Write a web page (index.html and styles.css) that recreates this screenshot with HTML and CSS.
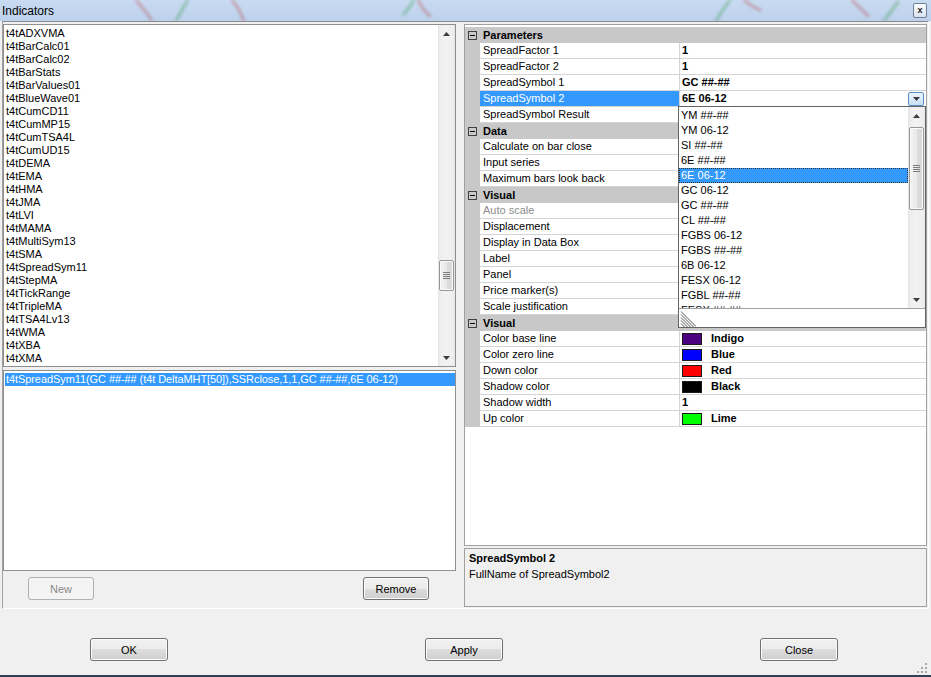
FILE: index.html
```html
<!DOCTYPE html>
<html lang="en">
<head>
<meta charset="utf-8">
<title>Indicators</title>
<link rel="stylesheet" href="styles.css">
</head>
<body>
<div class="window">
  <div class="titlebar">
    <svg class="title-chart" width="931" height="21" viewBox="0 0 931 21" aria-hidden="true">
      <g fill="none" stroke-width="3" stroke-linecap="round">
        <path class="tc-red" d="M136 0 L146 12 L152 21"/>
        <path class="tc-green" d="M176 21 L182 10 L188 0"/>
        <path class="tc-red" d="M232 0 L238 8 L244 21"/>
        <path class="tc-green" d="M404 14 L410 6 L414 0"/>
        <path class="tc-red" d="M418 0 L424 10 L430 16"/>
        <path class="tc-green" d="M716 21 L724 8 L730 0"/>
        <path class="tc-red" d="M744 0 L752 6 L760 10"/>
        <path class="tc-red" d="M852 0 L860 8 L868 16"/>
        <path class="tc-green" d="M884 21 L892 10 L898 2"/>
      </g>
    </svg>
    <span class="title-text">Indicators</span>
    <span class="title-close">x</span>
  </div>

  <div class="split">
    <div class="left-pane">
      <div class="listbox list-indicators">
        <ul class="list-items">
          <li>t4tADXVMA</li>
          <li>t4tBarCalc01</li>
          <li>t4tBarCalc02</li>
          <li>t4tBarStats</li>
          <li>t4tBarValues01</li>
          <li>t4tBlueWave01</li>
          <li>t4tCumCD11</li>
          <li>t4tCumMP15</li>
          <li>t4tCumTSA4L</li>
          <li>t4tCumUD15</li>
          <li>t4tDEMA</li>
          <li>t4tEMA</li>
          <li>t4tHMA</li>
          <li>t4tJMA</li>
          <li>t4tLVI</li>
          <li>t4tMAMA</li>
          <li>t4tMultiSym13</li>
          <li>t4tSMA</li>
          <li>t4tSpreadSym11</li>
          <li>t4tStepMA</li>
          <li>t4tTickRange</li>
          <li>t4tTripleMA</li>
          <li>t4tTSA4Lv13</li>
          <li>t4tWMA</li>
          <li>t4tXBA</li>
          <li>t4tXMA</li>
        </ul>
        <div class="vscroll">
          <div class="sb-arrow">
            <svg width="7" height="4" viewBox="0 0 7 4"><path d="M0 4 L3.5 0 L7 4 Z"/></svg>
          </div>
          <div class="sb-track">
            <div class="sb-thumb thumb-indicators"><span class="sb-grip"></span></div>
          </div>
          <div class="sb-arrow">
            <svg width="7" height="4" viewBox="0 0 7 4"><path d="M0 0 L7 0 L3.5 4 Z"/></svg>
          </div>
        </div>
      </div>

      <div class="listbox list-applied">
        <ul class="list-items">
          <li class="selected">t4tSpreadSym11(GC ##-## (t4t DeltaMHT[50]),SSRclose,1,1,GC ##-##,6E 06-12)</li>
        </ul>
      </div>

      <div class="pane-buttons">
        <button class="btn" disabled>New</button>
        <button class="btn">Remove</button>
      </div>
    </div>

    <div class="right-pane">
      <div class="propgrid">
        <div class="pg-cat"><span class="pg-toggle"></span>Parameters</div>
        <div class="pg-row"><span class="pg-gutter"></span><span class="pg-label">SpreadFactor 1</span><span class="pg-value bold">1</span></div>
        <div class="pg-row"><span class="pg-gutter"></span><span class="pg-label">SpreadFactor 2</span><span class="pg-value bold">1</span></div>
        <div class="pg-row"><span class="pg-gutter"></span><span class="pg-label">SpreadSymbol 1</span><span class="pg-value bold">GC ##-##</span></div>
        <div class="pg-row"><span class="pg-gutter"></span><span class="pg-label selected">SpreadSymbol 2</span><span class="pg-value bold">6E 06-12<span class="pg-dropbtn"><svg width="7" height="4" viewBox="0 0 7 4"><path d="M0 0 L7 0 L3.5 4 Z"/></svg></span></span></div>
        <div class="pg-row"><span class="pg-gutter"></span><span class="pg-label">SpreadSymbol Result</span><span class="pg-value"></span></div>

        <div class="pg-cat"><span class="pg-toggle"></span>Data</div>
        <div class="pg-row"><span class="pg-gutter"></span><span class="pg-label">Calculate on bar close</span><span class="pg-value"></span></div>
        <div class="pg-row"><span class="pg-gutter"></span><span class="pg-label">Input series</span><span class="pg-value"></span></div>
        <div class="pg-row"><span class="pg-gutter"></span><span class="pg-label">Maximum bars look back</span><span class="pg-value"></span></div>

        <div class="pg-cat"><span class="pg-toggle"></span>Visual</div>
        <div class="pg-row"><span class="pg-gutter"></span><span class="pg-label readonly">Auto scale</span><span class="pg-value"></span></div>
        <div class="pg-row"><span class="pg-gutter"></span><span class="pg-label">Displacement</span><span class="pg-value"></span></div>
        <div class="pg-row"><span class="pg-gutter"></span><span class="pg-label">Display in Data Box</span><span class="pg-value"></span></div>
        <div class="pg-row"><span class="pg-gutter"></span><span class="pg-label">Label</span><span class="pg-value"></span></div>
        <div class="pg-row"><span class="pg-gutter"></span><span class="pg-label">Panel</span><span class="pg-value"></span></div>
        <div class="pg-row"><span class="pg-gutter"></span><span class="pg-label">Price marker(s)</span><span class="pg-value"></span></div>
        <div class="pg-row"><span class="pg-gutter"></span><span class="pg-label">Scale justification</span><span class="pg-value"></span></div>

        <div class="pg-cat"><span class="pg-toggle"></span>Visual</div>
        <div class="pg-row"><span class="pg-gutter"></span><span class="pg-label">Color base line</span><span class="pg-value bold"><span class="swatch sw-indigo"></span>Indigo</span></div>
        <div class="pg-row"><span class="pg-gutter"></span><span class="pg-label">Color zero line</span><span class="pg-value bold"><span class="swatch sw-blue"></span>Blue</span></div>
        <div class="pg-row"><span class="pg-gutter"></span><span class="pg-label">Down color</span><span class="pg-value bold"><span class="swatch sw-red"></span>Red</span></div>
        <div class="pg-row"><span class="pg-gutter"></span><span class="pg-label">Shadow color</span><span class="pg-value bold"><span class="swatch sw-black"></span>Black</span></div>
        <div class="pg-row"><span class="pg-gutter"></span><span class="pg-label">Shadow width</span><span class="pg-value bold">1</span></div>
        <div class="pg-row"><span class="pg-gutter"></span><span class="pg-label">Up color</span><span class="pg-value bold"><span class="swatch sw-lime"></span>Lime</span></div>

        <div class="dropdown">
          <div class="dd-body">
            <ul class="dd-items">
              <li>YM ##-##</li>
              <li>YM 06-12</li>
              <li>SI ##-##</li>
              <li>6E ##-##</li>
              <li class="selected">6E 06-12</li>
              <li>GC 06-12</li>
              <li>GC ##-##</li>
              <li>CL ##-##</li>
              <li>FGBS 06-12</li>
              <li>FGBS ##-##</li>
              <li>6B 06-12</li>
              <li>FESX 06-12</li>
              <li>FGBL ##-##</li>
              <li class="partial">FESX ##-##</li>
            </ul>
            <div class="vscroll">
              <div class="sb-arrow">
                <svg width="7" height="4" viewBox="0 0 7 4"><path d="M0 4 L3.5 0 L7 4 Z"/></svg>
              </div>
              <div class="sb-track">
                <div class="sb-thumb thumb-dropdown"><span class="sb-grip"></span></div>
              </div>
              <div class="sb-arrow">
                <svg width="7" height="4" viewBox="0 0 7 4"><path d="M0 0 L7 0 L3.5 4 Z"/></svg>
              </div>
            </div>
          </div>
          <div class="dd-sizer">
            <svg width="16" height="16" viewBox="0 0 16 16" aria-hidden="true">
              <g stroke="#555" stroke-width="1">
                <path d="M1 3.5 L13.5 16"/>
                <path d="M1 6.5 L10.5 16"/>
                <path d="M1 9.5 L7.5 16"/>
                <path d="M1 12.5 L4.5 16"/>
                <path d="M1 0.5 L16 15.5"/>
              </g>
            </svg>
          </div>
        </div>
      </div>

      <div class="pg-help">
        <div class="help-title">SpreadSymbol 2</div>
        <div class="help-text">FullName of SpreadSymbol2</div>
      </div>
    </div>
  </div>

  <div class="footer">
    <button class="btn btn-wide">OK</button>
    <button class="btn btn-wide">Apply</button>
    <button class="btn btn-wide">Close</button>
    <svg class="size-grip" width="10" height="10" viewBox="0 0 10 10" aria-hidden="true">
      <g fill="#a8a8a8">
        <rect x="8" y="0" width="2" height="2"/>
        <rect x="4" y="4" width="2" height="2"/>
        <rect x="8" y="4" width="2" height="2"/>
        <rect x="0" y="8" width="2" height="2"/>
        <rect x="4" y="8" width="2" height="2"/>
        <rect x="8" y="8" width="2" height="2"/>
      </g>
    </svg>
  </div>
</div>
</body>
</html>
```

FILE: styles.css
```css
* {
  box-sizing: border-box;
}

html, body {
  margin: 0;
  padding: 0;
  background: #f0f0f0;
}

body {
  font-family: "Liberation Sans", Arial, sans-serif;
  font-size: 11px;
  color: #000;
}

ul {
  list-style: none;
  margin: 0;
  padding: 0;
}

.window {
  width: 931px;
  height: 677px;
  background: #f0f0f0;
  border-bottom: 2px solid #2f3e52;
  display: flex;
  flex-direction: column;
}

/* ---- caption bar ---- */
.titlebar {
  position: relative;
  height: 21px;
  flex: none;
  display: flex;
  align-items: center;
  background: linear-gradient(#c9dbf1, #bcd1ec);
  overflow: hidden;
}

.title-chart {
  position: absolute;
  left: 0;
  top: 0;
  filter: blur(1.4px);
}

.tc-red { stroke: rgba(190, 60, 60, 0.35); }
.tc-green { stroke: rgba(40, 150, 60, 0.35); }

.title-text {
  position: relative;
  font-size: 12px;
  padding-left: 2px;
  padding-top: 1px;
}

.title-close {
  position: relative;
  margin-left: auto;
  margin-right: 4px;
  width: 14px;
  height: 15px;
  border: 1px solid #6f7f94;
  border-radius: 2px;
  background: linear-gradient(#fbfcfe, #d9e3f0);
  font-size: 9px;
  font-weight: bold;
  line-height: 12px;
  text-align: center;
  color: #222;
}

/* ---- split panel ---- */
.split {
  flex: none;
  height: 588px;
  margin: 0 2px;
  border-top: 1px solid #8a8a8a;
  border-left: 1px solid #a0a0a0;
  border-right: 1px solid #fff;
  border-bottom: 1px solid #fff;
  display: flex;
}

.left-pane {
  width: 453px;
  padding-top: 2px;
  display: flex;
  flex-direction: column;
}

.right-pane {
  width: 463px;
  margin-left: 8px;
  padding-top: 2px;
  display: flex;
  flex-direction: column;
}

/* ---- list boxes ---- */
.listbox {
  background: #fff;
  border: 1px solid #8f8f8f;
  display: flex;
}

.list-indicators {
  height: 343px;
}

.list-applied {
  height: 201px;
  margin-top: 3px;
}

.list-items {
  flex: 1;
  padding: 2px 0 0 2px;
  line-height: 13px;
  white-space: nowrap;
  overflow: hidden;
}

.list-applied .list-items {
  padding: 2px 0 0 1px;
}

.list-items li.selected {
  background: #3399ff;
  color: #fff;
  padding-left: 1px;
  letter-spacing: -0.08px;
}

/* ---- scroll bars ---- */
.vscroll {
  width: 17px;
  flex: none;
  display: flex;
  flex-direction: column;
  background: linear-gradient(to right, #e2e2e2, #eeeeee 2px, #f2f2f2 50%, #eeeeee 15px, #e6e6e6);
}

.sb-arrow {
  height: 17px;
  flex: none;
  display: flex;
  align-items: center;
  justify-content: center;
}

.sb-arrow svg path,
.pg-dropbtn svg path {
  fill: #3c3c3c;
}

.sb-track {
  flex: 1;
  padding: 0 1px;
}

.sb-thumb {
  border: 1px solid #979797;
  border-radius: 2px;
  background: linear-gradient(to right, #f4f4f4, #e9e9e9 50%, #dcdcdc 51%, #d8d8d8);
  display: flex;
  align-items: center;
  justify-content: center;
  box-shadow: inset 0 0 0 1px #fbfbfb;
}

.thumb-indicators {
  margin-top: 218px;
  height: 31px;
}

.thumb-dropdown {
  margin-top: 3px;
  height: 83px;
}

.sb-grip {
  width: 7px;
  height: 7px;
  background: repeating-linear-gradient(#7d7d7d 0 1px, transparent 1px 2px);
}

/* ---- buttons ---- */
.btn {
  font-family: "Liberation Sans", Arial, sans-serif;
  font-size: 11px;
  color: #000;
  height: 23px;
  width: 66px;
  padding: 0;
  border: 1px solid #707070;
  border-radius: 3px;
  background: linear-gradient(#f2f2f2, #ebebeb 50%, #dddddd 50%, #cfcfcf);
  box-shadow: inset 0 0 0 1px #fcfcfc;
}

.btn:disabled {
  color: #8a8a8a;
  border-color: #adb2b5;
  background: #f4f4f4;
  box-shadow: none;
}

.pane-buttons {
  margin-top: 6px;
  padding-left: 25px;
  display: flex;
  gap: 269px;
}

/* ---- property grid ---- */
.propgrid {
  position: relative;
  height: 522px;
  border: 1px solid #a0a0a0;
  background: #fff;
  padding-top: 2px;
}

.pg-cat {
  height: 16px;
  background: #c8c8c8;
  font-weight: bold;
  display: flex;
  align-items: center;
  padding-left: 3px;
}

.pg-toggle {
  position: relative;
  width: 9px;
  height: 9px;
  border: 1px solid #404040;
  margin-right: 6px;
}

.pg-toggle::after {
  content: "";
  position: absolute;
  left: 1px;
  top: 3px;
  width: 5px;
  height: 1px;
  background: #000;
}

.pg-row {
  height: 16px;
  display: grid;
  grid-template-columns: 15px 200px 1fr;
}

.pg-gutter {
  background: #c8c8c8;
}

.pg-label,
.pg-value {
  border-bottom: 1px solid #d4d4d4;
  line-height: 15px;
  white-space: nowrap;
  overflow: hidden;
}

.pg-label {
  border-right: 1px solid #d4d4d4;
  padding-left: 3px;
}

.pg-label.selected {
  background: #3399ff;
  color: #fff;
}

.pg-label.readonly {
  color: #8d8d8d;
}

.pg-value {
  padding-left: 2px;
  display: flex;
  align-items: center;
}

.bold {
  font-weight: bold;
}

.pg-dropbtn {
  margin-left: auto;
  margin-right: 2px;
  width: 16px;
  height: 14px;
  border: 1px solid #5b8fc4;
  border-radius: 2px;
  background: linear-gradient(#eaf4fc, #c6e0f7);
  display: flex;
  align-items: center;
  justify-content: center;
}

.swatch {
  width: 20px;
  height: 12px;
  border: 1px solid #1a1a1a;
  margin-right: 9px;
  flex: none;
}

.sw-indigo { background: #4b0082; }
.sw-blue { background: #0000ff; }
.sw-red { background: #ff0000; }
.sw-black { background: #000000; }
.sw-lime { background: #00ff00; }

/* ---- drop-down list of the open editor ---- */
.dropdown {
  position: absolute;
  left: 213px;
  top: 81px;
  width: 248px;
  height: 222px;
  border: 1px solid #646464;
  background: #fff;
  display: flex;
  flex-direction: column;
}

.dd-body {
  height: 201px;
  display: flex;
}

.dd-items {
  flex: 1;
  padding-top: 1px;
  overflow: hidden;
  line-height: 15px;
}

.dd-items li {
  padding-left: 2px;
  height: 15px;
}

.dd-items li.partial {
  height: 5px;
  overflow: hidden;
}

.dd-items li.selected {
  background: #3399ff;
  color: #fff;
  outline: 1px dotted #333;
  outline-offset: -1px;
}

.dropdown .vscroll {
  width: 17px;
}

.dd-sizer {
  flex: 1;
  border-top: 1px solid #a0a0a0;
  display: flex;
  align-items: flex-end;
  padding-left: 1px;
}

.dd-sizer svg {
  display: block;
}

/* ---- help area under the grid ---- */
.pg-help {
  margin-top: 2px;
  height: 59px;
  border: 1px solid #a0a0a0;
  padding: 1px 4px;
  line-height: 16px;
}

.help-title {
  font-weight: bold;
}

/* ---- dialog buttons ---- */
.footer {
  position: relative;
  flex: 1;
  padding: 29px 0 0 90px;
  display: flex;
  align-items: flex-start;
  gap: 257px;
}

.btn-wide {
  width: 78px;
}

.size-grip {
  position: absolute;
  right: 4px;
  bottom: 2px;
}
```
